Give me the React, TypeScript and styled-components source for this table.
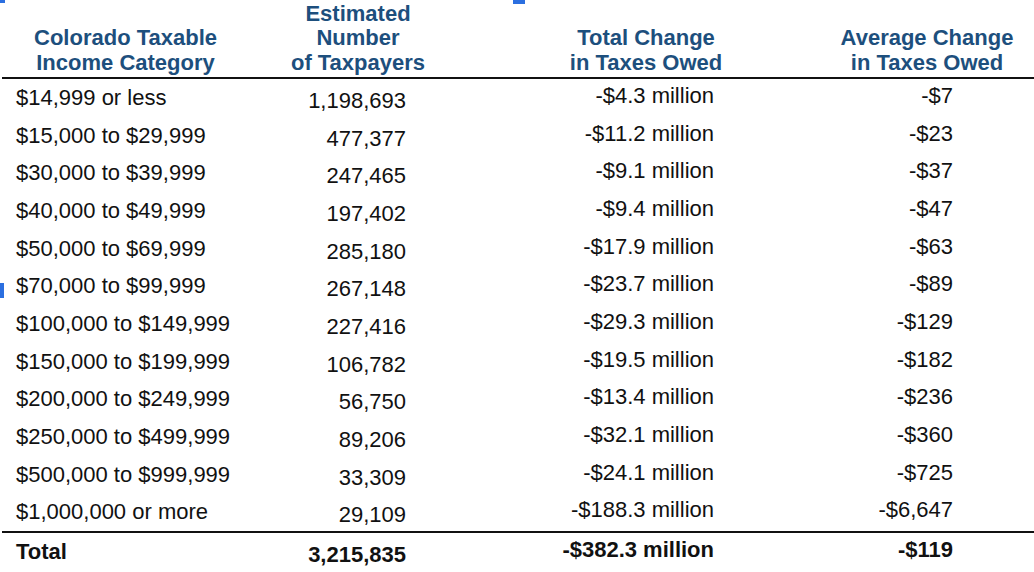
import React from "react";
import styled, { createGlobalStyle } from "styled-components";

const Global = createGlobalStyle`
  html, body { margin: 0; padding: 0; background: #ffffff; }
  body { font-family: "Liberation Sans", Arial, sans-serif; }
`;

const Page = styled.div`
  position: relative;
  width: 1034px;
  height: 572px;
  overflow: hidden;
  background: #fff;
`;

const Grid = styled.div`
  display: grid;
  grid-template-columns: 251px 214px 362px 200px;
`;

const HeadCell = styled.div`
  height: 75px;
  display: flex;
  flex-direction: column;
  justify-content: flex-end;
  align-items: center;
  text-align: center;
  color: #1d4f7d;
  font-weight: bold;
  font-size: 22px;
  line-height: 24.5px;
  padding-bottom: 2px;
`;

const Rule = styled.div`
  grid-column: 1 / -1;
  height: 2px;
  background: #111;
  margin-left: 2px;
  width: 1032px;
`;

const Cell = styled.div<{ $pl?: number; $pr?: number; $right?: boolean; $shift: number; $bold?: boolean }>`
  height: 37.7px;
  display: flex;
  align-items: center;
  justify-content: ${(p) => (p.$right ? "flex-end" : "flex-start")};
  padding-left: ${(p) => p.$pl ?? 0}px;
  padding-right: ${(p) => p.$pr ?? 0}px;
  font-size: 22px;
  color: #111;
  font-weight: ${(p) => (p.$bold ? "bold" : "normal")};
  white-space: nowrap;
  transform: translateY(${(p) => p.$shift}px);
`;

const Mark = styled.div<{ $x: number; $y: number; $w: number; $h: number }>`
  position: absolute;
  left: ${(p) => p.$x}px;
  top: ${(p) => p.$y}px;
  width: ${(p) => p.$w}px;
  height: ${(p) => p.$h}px;
  background: #2b6fe0;
`;

const rows: [string, string, string, string][] = [
  ["$14,999 or less", "1,198,693", "-$4.3 million", "-$7"],
  ["$15,000 to $29,999", "477,377", "-$11.2 million", "-$23"],
  ["$30,000 to $39,999", "247,465", "-$9.1 million", "-$37"],
  ["$40,000 to $49,999", "197,402", "-$9.4 million", "-$47"],
  ["$50,000 to $69,999", "285,180", "-$17.9 million", "-$63"],
  ["$70,000 to $99,999", "267,148", "-$23.7 million", "-$89"],
  ["$100,000 to $149,999", "227,416", "-$29.3 million", "-$129"],
  ["$150,000 to $199,999", "106,782", "-$19.5 million", "-$182"],
  ["$200,000 to $249,999", "56,750", "-$13.4 million", "-$236"],
  ["$250,000 to $499,999", "89,206", "-$32.1 million", "-$360"],
  ["$500,000 to $999,999", "33,309", "-$24.1 million", "-$725"],
  ["$1,000,000 or more", "29,109", "-$188.3 million", "-$6,647"],
];

const RowCells: React.FC<{ r: [string, string, string, string]; bold?: boolean }> = ({ r, bold }) => (
  <>
    <Cell $pl={16} $shift={0} $bold={bold}>{r[0]}</Cell>
    <Cell $right $pr={59} $shift={3} $bold={bold}>{r[1]}</Cell>
    <Cell $right $pr={113} $shift={-2} $bold={bold}>{r[2]}</Cell>
    <Cell $right $pr={74} $shift={-2} $bold={bold}>{r[3]}</Cell>
  </>
);

export default function App() {
  return (
    <Page>
      <Global />
      <Grid>
        <HeadCell>
          <span>Colorado Taxable</span>
          <span>Income Category</span>
        </HeadCell>
        <HeadCell>
          <span>Estimated</span>
          <span>Number</span>
          <span>of Taxpayers</span>
        </HeadCell>
        <HeadCell>
          <span>Total Change</span>
          <span>in Taxes Owed</span>
        </HeadCell>
        <HeadCell>
          <span>Average Change</span>
          <span>in Taxes Owed</span>
        </HeadCell>
        <Rule />
        {rows.map((r) => (
          <RowCells key={r[0]} r={r} />
        ))}
        <Rule />
        <RowCells r={["Total", "3,215,835", "-$382.3 million", "-$119"]} bold />
      </Grid>
      <Mark $x={0} $y={0} $w={5} $h={3} />
      <Mark $x={513} $y={0} $w={12} $h={4} />
      <Mark $x={0} $y={283} $w={4} $h={15} />
    </Page>
  );
}
